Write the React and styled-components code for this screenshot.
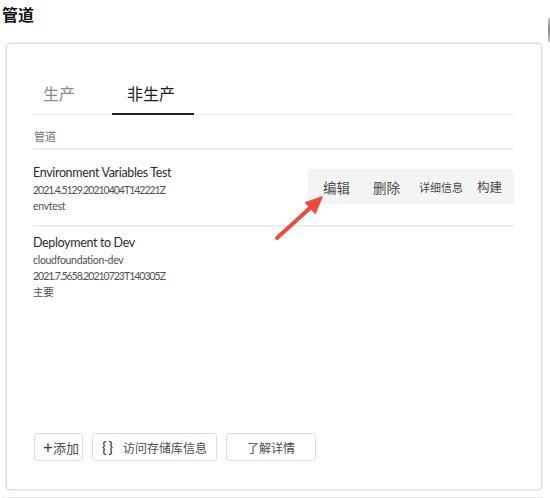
import React from "react";
import styled, { createGlobalStyle } from "styled-components";

const Global = createGlobalStyle`
  html, body { margin: 0; padding: 0; background: #fff; }
  body { font-family: "Lato", "Noto Sans CJK SC", sans-serif; color: #2c2c2c; }
  * { box-sizing: border-box; }
`;

const Page = styled.div`
  position: relative;
  width: 550px;
  height: 498px;
  overflow: hidden;
`;

const Title = styled.h1`
  margin: 0;
  padding: 4px 0 0 2px;
  font-size: 16px;
  line-height: 20px;
  font-weight: 700;
  color: #111;
  font-family: "Noto Sans CJK SC", sans-serif;
`;

const Card = styled.section`
  margin: 19px 0 0 6px;
  width: 536px;
  height: 447px;
  border: 1px solid #dcdcdc;
  border-radius: 4px;
  box-shadow: 0 0 0 1px #f1f1f1;
  padding: 37px 27px 28px 26px;
  display: flex;
  flex-direction: column;
`;

const TabBar = styled.div`
  display: flex;
  gap: 18px;
  border-bottom: 1px solid #ececec;
`;

const Tab = styled.div`
  padding: 0 19px 8px 15px;
  &:first-child { padding-left: 10px; }
  font-size: 16px;
  line-height: 24px;
  font-family: "Noto Sans CJK SC", sans-serif;
  color: ${(p) => (p.$active ? "#1f1f1f" : "#8c8c8c")};
  border-bottom: 2px solid ${(p) => (p.$active ? "#1f1f1f" : "transparent")};
  margin-bottom: -1px;
`;

const Header = styled.div`
  padding: 13px 0 4px 1px;
  font-size: 11px;
  line-height: 16px;
  color: #6e6e6e;
  font-family: "Noto Sans CJK SC", sans-serif;
  border-bottom: 2px solid #eeeeee;
`;

const List = styled.div`
  padding-top: 7px;
`;

const Row = styled.div`
  display: flex;
  justify-content: space-between;
  align-items: flex-start;
  padding: 7px 0 11px;
  border-bottom: ${(p) => (p.$last ? "none" : "2px solid #eeeeee")};
`;

const Info = styled.div`
  display: flex;
  flex-direction: column;
`;

const RowTitle = styled.div`
  font-size: 12.5px;
  line-height: 18px;
  color: #2c2c2c;
  letter-spacing: -0.35px;
`;

const RowSub = styled.div`
  font-size: 10.5px;
  line-height: 16px;
  color: #505050;
  letter-spacing: ${(p) => (p.$digits ? "-1px" : "-0.3px")};
`;

const ActionBar = styled.div`
  display: flex;
  align-items: center;
  margin-top: 5px;
  width: 206px;
  height: 35px;
  padding-left: 15px;
  background: #f4f4f4;
  border-radius: 4px;
`;

const ActionButton = styled.span`
  font-family: "Noto Sans CJK SC", sans-serif;
  font-size: ${(p) => p.$size}px;
  margin-left: ${(p) => p.$gap}px;
  color: #4a4a4a;
  line-height: 20px;
  white-space: nowrap;
`;

const Footer = styled.div`
  margin-top: auto;
  display: flex;
  gap: 9px;
  padding-left: 1px;
`;

const Button = styled.button`
  height: 28px;
  min-width: ${(p) => p.$min || 0}px;
  padding: 0 ${(p) => p.$padR ?? 9}px 0 ${(p) => p.$padL ?? 9}px;
  display: inline-flex;
  align-items: center;
  justify-content: center;
  gap: ${(p) => p.$gap ?? 0}px;
  background: #fff;
  border: 1px solid #dedede;
  border-radius: 3px;
  font-family: "Noto Sans CJK SC", sans-serif;
  font-size: ${(p) => p.$size || 12}px;
  color: #4b4b4b;
  cursor: pointer;
`;

const Braces = styled.span`
  font-family: "Lato", sans-serif;
  font-size: 15px;
  font-weight: 400;
  color: #2c2c2c;
  letter-spacing: 2px;
`;

const Plus = styled.span`
  font-family: "Lato", sans-serif;
  font-size: 17px;
  font-weight: 400;
  color: #3c3c3c;
`;

const BottomRule = styled.div`
  margin: 7px 7px 0 2px;
  border-top: 1px solid #e9e9e9;
`;

const ScrollThumb = styled.div`
  position: absolute;
  right: 0;
  top: 18px;
  width: 2px;
  height: 24px;
  background: linear-gradient(#c8c8c8, #888 50%, #c8c8c8);
`;

const ArrowSvg = styled.svg`
  position: absolute;
  left: 268px;
  top: 190px;
  overflow: visible;
`;

function Arrow() {
  return (
    <ArrowSvg width="64" height="56" viewBox="0 0 64 56">
      <line x1="9" y1="48" x2="42" y2="18" stroke="#ee4b3f" strokeWidth="4" strokeLinecap="round" />
      <polygon points="54,7 47.2,23.2 37.6,12.6" fill="#ee4b3f" stroke="#ee4b3f" strokeWidth="1.5" strokeLinejoin="round" />
    </ArrowSvg>
  );
}

export default function App() {
  return (
    <Page>
      <Global />
      <Title>管道</Title>
      <Card>
        <TabBar>
          <Tab>生产</Tab>
          <Tab $active>非生产</Tab>
        </TabBar>
        <Header>管道</Header>
        <List>
          <Row>
            <Info>
              <RowTitle>Environment Variables Test</RowTitle>
              <RowSub $digits>2021.4.5129.20210404T142221Z</RowSub>
              <RowSub>envtest</RowSub>
            </Info>
            <ActionBar>
              <ActionButton $size={13.5} $gap={0}>编辑</ActionButton>
              <ActionButton $size={13.5} $gap={23}>删除</ActionButton>
              <ActionButton $size={11} $gap={19}>详细信息</ActionButton>
              <ActionButton $size={12.5} $gap={14}>构建</ActionButton>
            </ActionBar>
          </Row>
          <Row $last>
            <Info>
              <RowTitle>Deployment to Dev</RowTitle>
              <RowSub>cloudfoundation-dev</RowSub>
              <RowSub $digits>2021.7.5658.20210723T140305Z</RowSub>
              <RowSub>主要</RowSub>
            </Info>
          </Row>
        </List>
        <Footer>
          <Button $size={13} $padL={8} $padR={3}>
            <Plus>+</Plus>添加
          </Button>
          <Button $padL={9} $padR={9} $gap={8}>
            <Braces>{"{}"}</Braces>访问存储库信息
          </Button>
          <Button $min={90}>了解详情</Button>
        </Footer>
      </Card>
      <BottomRule />
      <ScrollThumb />
      <Arrow />
    </Page>
  );
}
